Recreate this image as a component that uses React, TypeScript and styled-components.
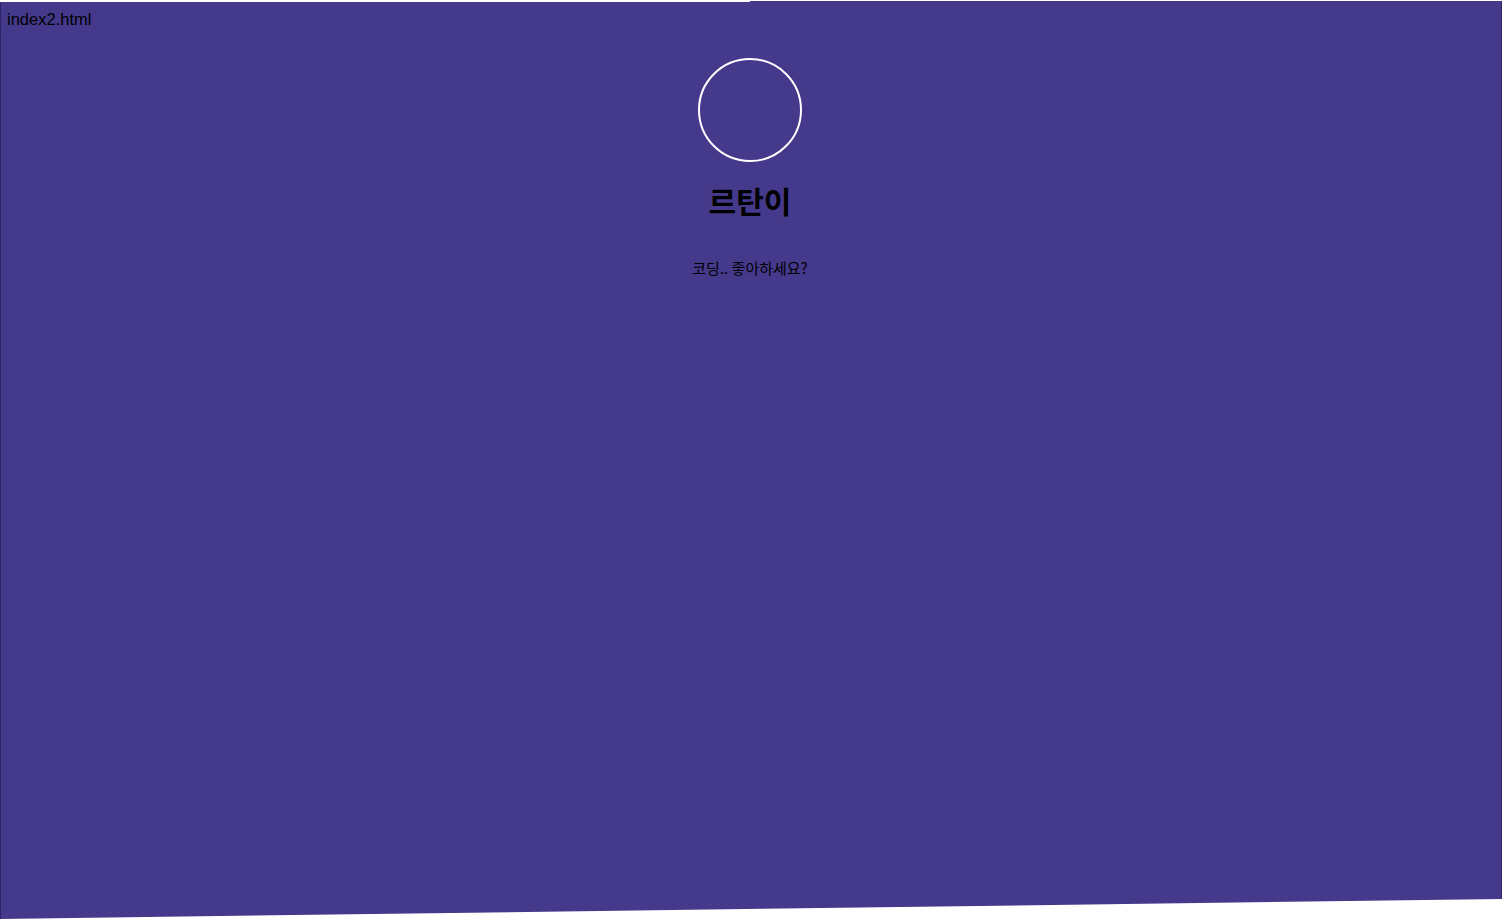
import React from "react";
import styled, { createGlobalStyle } from "styled-components";

const Global = createGlobalStyle`
  html, body { margin: 0; padding: 0; background: #ffffff; }
  body { font-family: "Liberation Sans", "Noto Sans CJK KR", sans-serif; }
`;

const Stage = styled.div`
  width: 1502px;
  height: 921px;
  box-sizing: border-box;
  padding-right: 2px;
  background: #45398c;
  box-shadow: inset 1px 0 0 #2b2566, inset -1px 0 0 #2b2566;
  clip-path: polygon(0px 2px, 750px 2px, 750px 1px, 1502px 1px, 1502px 899px, 0px 919px);
  display: flex;
  flex-direction: column;
`;

const FileLabel = styled.div`
  padding: 10px 0 0 7px;
  font-size: 16.5px;
  line-height: 18px;
  color: #000000;
`;

const Profile = styled.section`
  display: flex;
  flex-direction: column;
  align-items: center;
  margin-top: 30px;
`;

const Avatar = styled.div`
  width: 100px;
  height: 100px;
  border: 2px solid #ffffff;
  border-radius: 50%;
`;

const Name = styled.h1`
  margin: 19px 0 0;
  font-family: "Noto Sans CJK KR", sans-serif;
  font-size: 30px;
  line-height: 38px;
  font-weight: 700;
  color: #000000;
`;

const Bio = styled.p`
  margin: 39px 0 0;
  font-family: "Noto Sans CJK KR", sans-serif;
  font-size: 15px;
  line-height: 20px;
  color: #000000;
`;

export default function App() {
  return (
    <>
      <Global />
      <Stage>
        <FileLabel>index2.html</FileLabel>
        <Profile>
          <Avatar />
          <Name>르탄이</Name>
          <Bio>코딩.. 좋아하세요?</Bio>
        </Profile>
      </Stage>
    </>
  );
}
